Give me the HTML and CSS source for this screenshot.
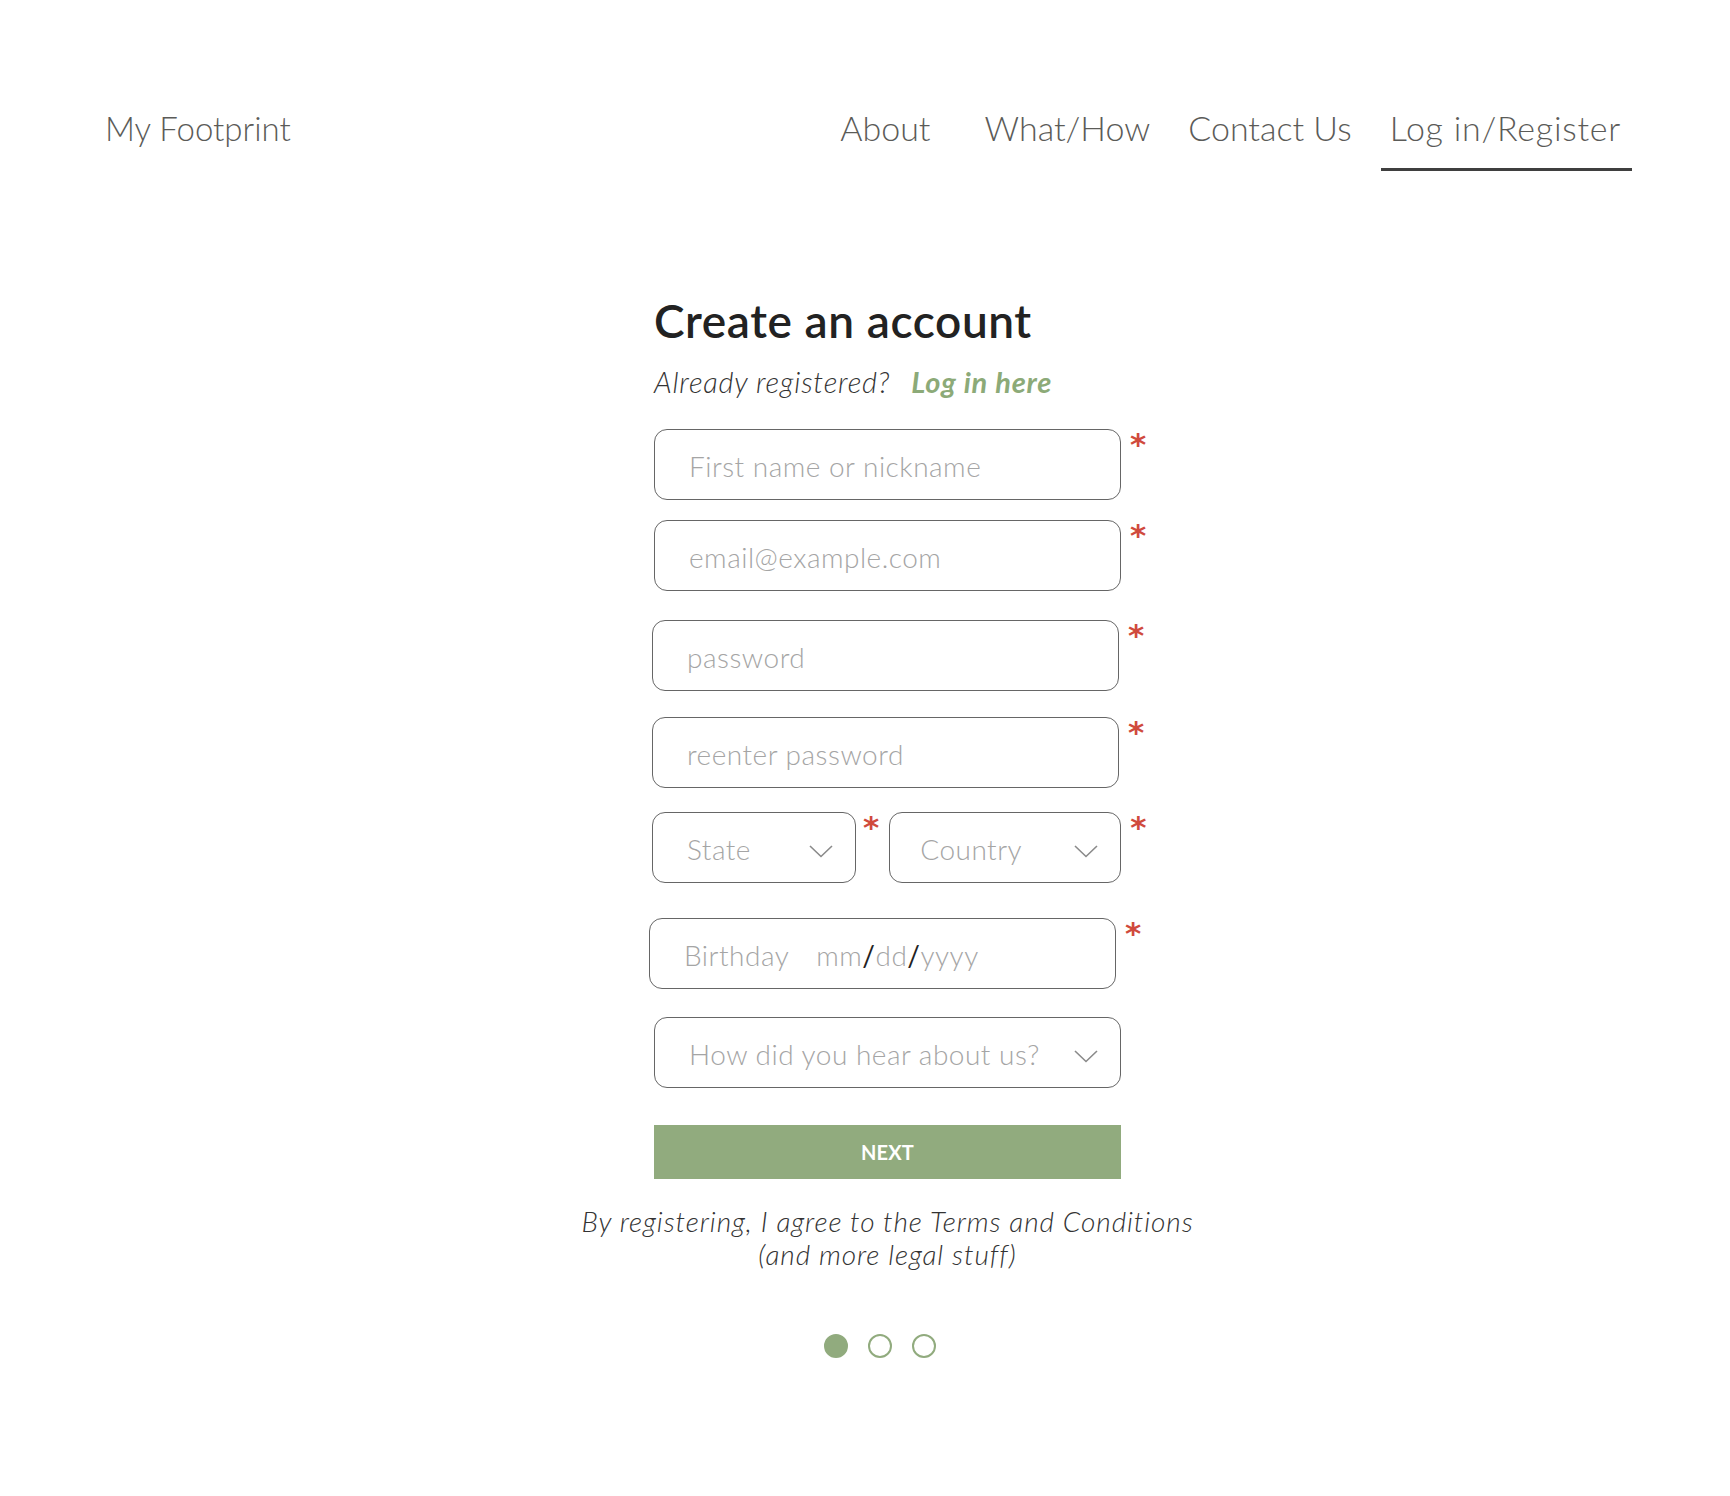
FILE: index.html
```html
<!DOCTYPE html>
<html lang="en">
<head>
<meta charset="utf-8">
<title>My Footprint – Create an account</title>
<link rel="stylesheet" href="styles.css">
</head>
<body>
<header class="topbar">
  <div class="logo">My Footprint</div>
  <nav class="nav">
    <a class="nav-link nav-link--about" href="#">About</a>
    <a class="nav-link" href="#">What/How</a>
    <a class="nav-link" href="#">Contact Us</a>
    <a class="nav-link nav-link--active" href="#">Log in/Register</a>
  </nav>
</header>

<main class="form-wrap">
  <h1 class="title">Create an account</h1>
  <p class="subtitle">Already registered?<a class="login-link" href="#">Log in here</a></p>

  <div class="row row--first">
    <input class="field" type="text" placeholder="First name or nickname">
    <span class="req">*</span>
  </div>
  <div class="row row--email">
    <input class="field" type="email" placeholder="email@example.com">
    <span class="req">*</span>
  </div>
  <div class="row row--pass">
    <input class="field field--shift" type="password" placeholder="password">
    <span class="req">*</span>
  </div>
  <div class="row row--repass">
    <input class="field field--shift" type="password" placeholder="reenter password">
    <span class="req">*</span>
  </div>
  <div class="row row--place">
    <div class="field select select--state"><span>State</span>
      <svg class="chev" viewBox="0 0 24 13"><polyline points="1,1 12,11.5 23,1"/></svg>
    </div>
    <span class="req req--state">*</span>
    <div class="field select select--country"><span>Country</span>
      <svg class="chev" viewBox="0 0 24 13"><polyline points="1,1 12,11.5 23,1"/></svg>
    </div>
    <span class="req">*</span>
  </div>
  <div class="row row--birth">
    <div class="field birthday"><span class="bd-label">Birthday</span><span class="bd-date">mm<b class="slash">/</b>dd<b class="slash">/</b>yyyy</span></div>
    <span class="req">*</span>
  </div>
  <div class="row row--hear">
    <div class="field select"><span>How did you hear about us?</span>
      <svg class="chev" viewBox="0 0 24 13"><polyline points="1,1 12,11.5 23,1"/></svg>
    </div>
  </div>

  <button class="next" type="button">NEXT</button>

  <p class="legal">By registering, I agree to the Terms and Conditions<br>(and more legal stuff)</p>

  <div class="dots">
    <span class="dot dot--on"></span>
    <span class="dot"></span>
    <span class="dot"></span>
  </div>
</main>
</body>
</html>
```

FILE: styles.css
```css
* { box-sizing: border-box; }

body {
  margin: 0;
  background: #ffffff;
  font-family: "Lato", "Open Sans", "Liberation Sans", sans-serif;
  color: #333;
}

.topbar {
  display: flex;
  justify-content: space-between;
  align-items: flex-start;
  padding: 107px 98px 0 105px;
}

.logo {
  font-size: 33px;
  font-weight: 300;
  color: #5b5b58;
  line-height: 42px;
}

.nav {
  display: flex;
  gap: 17px;
}

.nav-link {
  font-size: 34px;
  font-weight: 300;
  color: #5b5b58;
  text-decoration: none;
  line-height: 42px;
  padding: 0 12px 19px 9px;
  border-bottom: 3px solid transparent;
}

.nav-link--about { margin-right: 16px; }

.nav-link--active {
  border-bottom-color: #3f3f3f;
  letter-spacing: 0.75px;
  padding-right: 11px;
}

.form-wrap {
  margin-left: calc(50% - 211px);
  width: 500px;
  padding-top: 122px;
}

.title {
  margin: 0;
  font-size: 46px;
  font-weight: 600;
  letter-spacing: 0.6px;
  color: #222;
  line-height: 56px;
}

.subtitle {
  margin: 15px 0 0;
  font-size: 29px;
  font-style: italic;
  font-weight: 300;
  letter-spacing: 0.8px;
  color: #333;
  line-height: 36px;
}

.login-link {
  margin-left: 21px;
  color: #8caa78;
  font-weight: 700;
  text-decoration: none;
}

.row {
  display: flex;
  align-items: flex-start;
}

.row--first  { margin-top: 29px; }
.row--email  { margin-top: 20px; }
.row--pass   { margin-top: 29px; margin-left: -2px; }
.row--repass { margin-top: 26px; margin-left: -2px; }
.row--place  { margin-top: 24px; margin-left: -2px; }
.row--birth  { margin-top: 35px; margin-left: -5px; }
.row--hear   { margin-top: 28px; }

.field {
  flex: 0 0 467px;
  width: 467px;
  height: 71px;
  border: 1.5px solid #666;
  border-radius: 13px;
  background: #fff;
  padding: 2px 34px 0;
  font-family: inherit;
  font-size: 28px;
  font-weight: 300;
  letter-spacing: 0.5px;
  color: #333;
  outline: none;
}

.field::placeholder { color: #a5a5a5; }

.select {
  display: flex;
  align-items: center;
  justify-content: space-between;
  color: #a5a5a5;
  padding: 2px 22px 0 34px;
}

.select--state { flex: 0 0 204px; width: 204px; }
.select--country { flex: 0 0 232px; width: 232px; padding-left: 30px; }

.chev {
  width: 24px;
  height: 13px;
  margin-top: 6px;
  fill: none;
  stroke: #8a8a8a;
  stroke-width: 1.6;
}

.birthday {
  display: flex;
  align-items: center;
  padding-top: 2px;
  color: #a5a5a5;
}

.bd-label { margin-right: 27px; }

.slash {
  font-weight: 400;
  color: #222;
}

.req {
  color: #d04a3d;
  font-family: "DejaVu Sans", sans-serif;
  font-weight: 700;
  font-size: 31px;
  line-height: 1;
  margin-left: 9px;
  margin-top: 0;
}

.req--state { margin-left: 7px; margin-right: 10px; }

.next {
  display: block;
  margin-top: 37px;
  width: 467px;
  height: 54px;
  border: 0;
  background: #91ab7e;
  color: #fff;
  font-family: inherit;
  font-size: 20px;
  font-weight: 700;
  letter-spacing: 0.2px;
  cursor: pointer;
}

.legal {
  width: 467px;
  display: flex;
  justify-content: center;
  text-align: center;
  margin: 26px 0 0;
  font-size: 28px;
  font-style: italic;
  font-weight: 300;
  letter-spacing: 0.9px;
  line-height: 33px;
  color: #333;
  white-space: nowrap;
}

.dots {
  width: 467px;
  display: flex;
  justify-content: center;
  gap: 20px;
  margin-top: 63px;
  padding-right: 16px;
}

.dot {
  width: 24px;
  height: 24px;
  border-radius: 50%;
  border: 2px solid #91ab7e;
}

.dot--on { background: #91ab7e; }
```
